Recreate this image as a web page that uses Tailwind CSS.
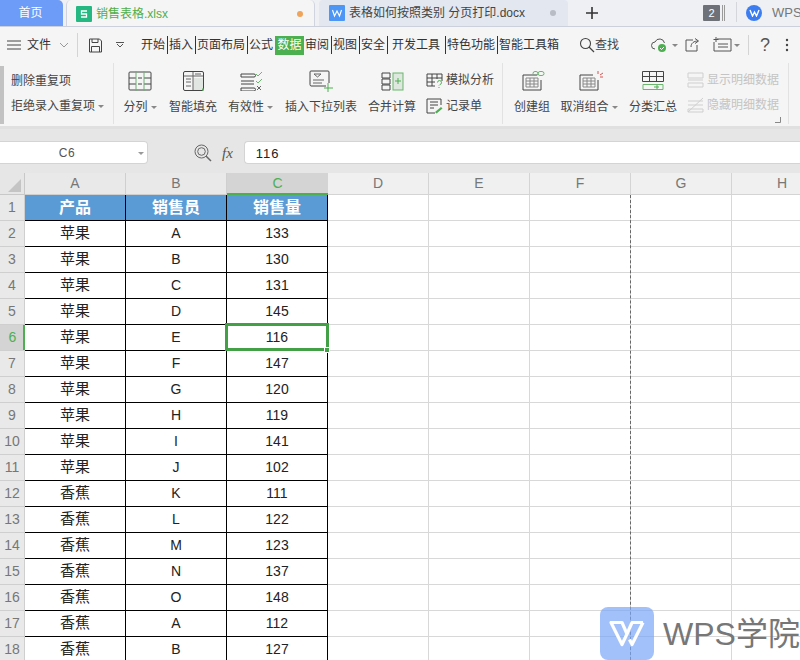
<!DOCTYPE html>
<html lang="zh"><head><meta charset="utf-8"><script src="https://cdn.jsdelivr.net/npm/@tailwindcss/browser@4"></script></head>
<body class="m-0 bg-white">
<div class="relative w-[800px] h-[660px] overflow-hidden bg-white text-[12px] text-[#333] font-['Liberation_Sans','Noto_Sans_CJK_SC',sans-serif]">

<!-- tabs -->
<div class="flex h-[27px] bg-[#eef0f4] border-b border-[#ccd0da] relative overflow-hidden [&>*]:shrink-0">
  <div class="w-[63px] h-[26px] bg-[#6c9cf8] rounded-tr-[5px] text-white text-[12px] flex items-center justify-center pr-[2px]">首页</div>
  <div class="ml-[3px] w-[249px] h-[27px] bg-[#f5f5f5] border-x border-[#d0d4de] rounded-t-[5px] flex items-center pl-[9px] pr-[11px] z-10">
    <svg width="16" height="16" viewBox="0 0 16 16" class="shrink-0"><rect width="16" height="16" rx="1" fill="#25b883"/><path d="M11 5H5.500v3h5v3H5" fill="none" stroke="#fff" stroke-width="1.300"/></svg>
    <span class="ml-[4px] text-[12px] text-[#4fae4c]">销售表格.xlsx</span>
    <span class="ml-auto w-[6px] h-[6px] rounded-full bg-[#f0a35a]"></span>
  </div>
  <div class="ml-[4px] w-[249px] h-[26px] bg-[#e3e7f0] rounded-t-[4px] flex items-center pl-[10px] pr-[12px]">
    <svg width="16" height="16" viewBox="0 0 16 16" class="shrink-0"><rect width="16" height="16" rx="1" fill="#4d96f5"/><path d="M3.500 5l2 6 2.500-5 2.500 5 2-6" fill="none" stroke="#fff" stroke-width="1.100"/></svg>
    <span class="ml-[4px] text-[12px] text-[#444] whitespace-nowrap">表格如何按照类别 分页打印.docx</span>
    <span class="ml-auto w-[6px] h-[6px] rounded-full bg-[#b8bcc4]"></span>
  </div>
  <svg width="14" height="14" viewBox="0 0 14 14" class="ml-[17px] mt-[6px]"><path d="M7 1v12M1 7h12" stroke="#333" stroke-width="1.600"/></svg>
  <div class="ml-[104px] mt-[5px] w-[17px] h-[16px] bg-[#6e7278] text-white text-[11px] rounded-[1px] flex items-center justify-center">2</div>
  <div class="ml-[2px] mt-[5px] w-[3px] h-[16px] border-x border-[#9a9a9a]"></div>
  <div class="ml-[11px] mt-[2px] w-px h-[20px] bg-[#d4d6dc]"></div>
  <div class="ml-[9px] mt-[5px] w-[16px] h-[16px] rounded-full bg-[#3d7df2] flex items-center justify-center">
    <svg width="11" height="8" viewBox="0 0 11 8"><path d="M1 1l2.500 6L5.500 3l2 4L10 1" fill="none" stroke="#fff" stroke-width="1.400"/></svg>
  </div>
  <span class="ml-[10px] mt-[3px] text-[13px] text-[#777] whitespace-nowrap">WPS学院</span>
</div>

<!-- menu -->
<div class="flex items-center h-[36px] bg-[#f5f5f5] text-[12px] text-[#333] relative whitespace-nowrap">
  <svg width="15" height="10" viewBox="0 0 15 10" class="ml-[7px]"><path d="M0 1h14M0 5h14M0 9h14" stroke="#444"/></svg>
  <span class="ml-[5px]">文件</span>
  <svg width="10" height="6" viewBox="0 0 10 6" class="ml-[8px]"><path d="M1 1l4 4 4-4" fill="none" stroke="#999"/></svg>
  <div class="ml-[8px] w-px h-[24px] bg-[#d4d4d4]"></div>
  <svg width="15" height="15" viewBox="0 0 15 15" class="ml-[10px]"><path d="M1.500 1h10l2 2v11h-12zM4 1v3.500h6V1M3.500 14V8.500h8V14" fill="none" stroke="#444"/></svg>
  <svg width="8" height="6" viewBox="0 0 8 6" class="ml-[13px]"><path d="M0 0.500h8M1 2l3 3 3-3" fill="none" stroke="#555"/></svg>
  <div class="ml-[17px] flex items-center">
    <span class="w-[24px]">开始</span><i class="w-px h-[18px] bg-[#333] ml-[2px] mr-[1px]"></i>
    <span class="w-[24px]">插入</span><i class="w-px h-[18px] bg-[#333] ml-[2px] mr-[1px]"></i>
    <span class="w-[48px]">页面布局</span><i class="w-px h-[18px] bg-[#333] ml-[2px] mr-[1px]"></i>
    <span class="w-[26px]">公式</span>
    <span class="w-[29px] h-[19px] leading-[19px] text-center bg-[#4caf50] text-white">数据</span>
    <span class="ml-[1px] w-[24px]">审阅</span><i class="w-px h-[18px] bg-[#333] ml-[2px] mr-[1px]"></i>
    <span class="w-[24px]">视图</span><i class="w-px h-[18px] bg-[#333] ml-[2px] mr-[1px]"></i>
    <span class="w-[24px]">安全</span><i class="w-px h-[18px] bg-[#333] ml-[2px] mr-[4px]"></i>
    <span class="w-[48px]">开发工具</span><i class="w-px h-[18px] bg-[#333] ml-[5px] mr-[1px]"></i>
    <span class="w-[48px]">特色功能</span><i class="w-px h-[18px] bg-[#333] ml-[2px] mr-[1px]"></i>
    <span class="w-[60px]">智能工具箱</span>
  </div>
  <svg width="16" height="16" viewBox="0 0 16 16" class="ml-[20px]"><circle cx="6.500" cy="6.500" r="5" fill="none" stroke="#444" stroke-width="1.100"/><path d="M10 10l5 5" stroke="#444" stroke-width="1.200"/></svg>
  <span class="text-[#444]">查找</span>
  <svg width="20" height="16" viewBox="0 0 20 16" class="ml-[31px]"><path d="M5 12a3.500 3.500 0 0 1 0-7 5 5 0 0 1 9.500 1" fill="none" stroke="#555"/><circle cx="12" cy="11" r="4" fill="#4caf50"/><path d="M10 11l1.500 1.500 2.500-2.500" fill="none" stroke="#fff"/></svg>
  <i class="ml-[2px] border-x-[3px] border-x-transparent border-t-[3px] border-t-[#888]"></i>
  <svg width="15" height="14" viewBox="0 0 15 14" class="ml-[7px]"><path d="M8 2H1v11h11V7M6 9c0-4 3-6 7-6M10 0.500l3.500 2.500L10 5.500" fill="none" stroke="#555"/></svg>
  <svg width="20" height="16" viewBox="0 0 20 16" class="ml-[13px]"><path d="M4 2h14v12H1V5M3 0v5M0.500 2.500h5M5 7h10M5 10h10" fill="none" stroke="#555"/></svg>
  <i class="ml-[1px] border-x-[3px] border-x-transparent border-t-[3px] border-t-[#888]"></i>
  <div class="ml-[8px] w-px h-[20px] bg-[#d4d4d4]"></div>
  <span class="ml-[11px] text-[18px] font-light text-[#555]">?</span>
  <svg width="4" height="14" viewBox="0 0 4 14" class="ml-[15px]"><circle cx="2" cy="2" r="1.200" fill="#444"/><circle cx="2" cy="7" r="1.200" fill="#444"/><circle cx="2" cy="12" r="1.200" fill="#444"/></svg>
</div>

<!-- ribbon -->
<div class="flex h-[66px] bg-[#f5f5f5] border-b-[3px] border-[#e0e0e0] text-[12px] text-[#444] whitespace-nowrap">
  <div class="relative w-[114px] border-r border-[#e2e2e2] mb-[2px] flex flex-col pl-[11px] pt-[9px] gap-[7px]">
    <div class="absolute left-0 top-[3px] w-[4px] h-[58px] bg-[#c2c2c2]"></div>
    <span class="leading-[18px]">删除重复项</span>
    <span class="leading-[18px]">拒绝录入重复项<i class="inline-block ml-[3px] mb-[2px] border-x-[3px] border-x-transparent border-t-[3px] border-t-[#888]"></i></span>
  </div>
  <div class="relative w-[389px] border-r border-[#e2e2e2] mb-[2px]">
    <div class="flex pt-[7px] h-[63px]">
      <div class="w-[52px] flex flex-col items-center">
        <svg width="24" height="20" viewBox="0 0 24 20" class="mt-[1px]"><path d="M8 1H2a1 1 0 0 0-1 1v16a1 1 0 0 0 1 1h6M16 1h6a1 1 0 0 1 1 1v16a1 1 0 0 1-1 1h-6M1 7h7M16 7h7M1 13h7M16 13h7M8 1h8M8 19h8M10 7h4M10 13h4" fill="none" stroke="#444"/><path d="M8 0v20M16 0v20" stroke="#6fae72"/></svg>
        <span class="mt-[9px] leading-[14px]">分列<i class="inline-block ml-[3px] mb-[2px] border-x-[3px] border-x-transparent border-t-[3px] border-t-[#888]"></i></span>
      </div>
      <div class="w-[54px] flex flex-col items-center">
        <svg width="21" height="20" viewBox="0 0 21 20" class="mt-[1px]"><rect x="0.500" y="0.500" width="20" height="19" rx="1.500" fill="none" stroke="#444"/><rect x="10" y="7" width="10" height="12" fill="#e2e6e2"/><path d="M1 5h19M10 1v18M3 8h5M3 11h5M3 15h5M12 3h6" stroke="#666"/><path d="M19 18.500h2" stroke="#4caf50" stroke-width="2"/></svg>
        <span class="mt-[9px] leading-[14px]">智能填充</span>
      </div>
      <div class="w-[55px] flex flex-col items-center ml-[3px]">
        <svg width="22" height="20" viewBox="0 0 22 20" class="mt-[1px]"><path d="M1 3h13a1 1 0 0 1 0 3H1zM1 10h13M1 13h13M1 17h13a1 1 0 0 1 0 3H1z" fill="none" stroke="#444"/><path d="M16 3l2 2 4-4M16 10l2 2 4-4" fill="none" stroke="#6bb56e"/><path d="M17 15l4 4M21 15l-4 4" stroke="#666"/></svg>
        <span class="mt-[9px] leading-[14px]">有效性<i class="inline-block ml-[3px] mb-[2px] border-x-[3px] border-x-transparent border-t-[3px] border-t-[#888]"></i></span>
      </div>
      <div class="w-[74px] flex flex-col items-center ml-[6px]">
        <svg width="24" height="22" viewBox="0 0 24 22"><path d="M17 16H2a1.500 1.500 0 0 1-1-1.500V2a1 1 0 0 1 1-1h17a1 1 0 0 1 1 1v11" fill="none" stroke="#444"/><path d="M5 4h7l-3.500 3zM4 10h11M4 13h9" fill="none" stroke="#666"/><path d="M19 13v9M15 18h9" stroke="#4caf50"/></svg>
        <span class="mt-[8px] leading-[14px]">插入下拉列表</span>
      </div>
      <div class="w-[52px] flex flex-col items-center ml-[8px]">
        <svg width="23" height="20" viewBox="0 0 23 20" class="mt-[1px]"><path d="M1 2h8v5H1zM1 8h8v5H1zM1 14h8v5H1z" fill="none" stroke="#444"/><rect x="12" y="2" width="10" height="17" fill="#dfe8df" stroke="#6bb56e"/><path d="M14 10h6M17 7v6" stroke="#4caf50"/></svg>
        <span class="mt-[9px] leading-[14px]">合并计算</span>
      </div>
      <div class="ml-[8px] flex flex-col pt-[1px] gap-[8px]">
        <div class="flex items-center h-[18px]"><svg width="17" height="15" viewBox="0 0 17 15"><path d="M9 13H1V1h15v7M1 5h15M6 1v12M11 1v5M1 9h8" fill="none" stroke="#444"/><path d="M11.500 9.500a2 2 0 1 1 2.500 2l-1 1M13 14v1" fill="none" stroke="#4caf50"/></svg><span class="ml-[3px]">模拟分析</span></div>
        <div class="flex items-center h-[18px]"><svg width="17" height="16" viewBox="0 0 17 16"><path d="M15 7V1H1v14h8M4 4h8M4 7h8M4 10h4" fill="none" stroke="#444"/><path d="M9 14l6-5 1.500 1.500-6 5z" fill="#4caf50"/></svg><span class="ml-[3px]">记录单</span></div>
      </div>
    </div>
  </div>
  <div class="relative w-[286px] flex pt-[7px] mb-[2px] border-r border-[#e2e2e2]">
    <div class="w-[58px] flex flex-col items-center">
      <svg width="24" height="20" viewBox="0 0 24 20" class="mt-[1px] ml-[4px]"><path d="M15 4H1v15h18V9" fill="none" stroke="#444"/><path d="M4 7h12v9H4zM4 10h12M4 13h12M8 7v9M12 7v9" fill="none" stroke="#888"/><rect x="11" y="0.500" width="5" height="4" rx="2" fill="none" stroke="#6bb56e"/><rect x="16" y="0.500" width="6" height="4" rx="2" fill="none" stroke="#6bb56e"/></svg>
      <span class="mt-[9px] leading-[14px]">创建组</span>
    </div>
    <div class="w-[56px] flex flex-col items-center">
      <svg width="24" height="20" viewBox="0 0 24 20" class="mt-[1px] ml-[4px]"><path d="M14 4H1v15h18V9" fill="none" stroke="#444"/><path d="M4 7h12v9H4zM4 10h12M4 13h12M8 7v9M12 7v9" fill="none" stroke="#888"/><path d="M19 0v3M21 4l3-2M21 6h3" stroke="#d9534f"/></svg>
      <span class="mt-[9px] leading-[14px]">取消组合<i class="inline-block ml-[3px] mb-[2px] border-x-[3px] border-x-transparent border-t-[3px] border-t-[#888]"></i></span>
    </div>
    <div class="w-[58px] flex flex-col items-center ml-[7px]">
      <svg width="22" height="20" viewBox="0 0 22 20" class="mt-[1px]"><path d="M0.500 0.500h21v10h-21zM0.500 5.500h21M7.500 0.500v10M14.500 0.500v10" fill="none" stroke="#444"/><path d="M1 13.500h20v5H1z" fill="none" stroke="#6bb56e"/><path d="M12 16h5M15 14v4" stroke="#4caf50"/></svg>
      <span class="mt-[9px] leading-[14px]">分类汇总</span>
    </div>
    <div class="ml-[5px] flex flex-col gap-[7px] text-[#c4c4c4] pt-[1px]">
      <div class="flex items-center h-[18px]"><svg width="17" height="16" viewBox="0 0 17 16"><path d="M1 1h15v5H1zM1 8h15M1 11h15v4H1z" fill="none" stroke="#cfcfcf"/></svg><span class="ml-[3px]">显示明细数据</span></div>
      <div class="flex items-center h-[18px]"><svg width="17" height="16" viewBox="0 0 17 16"><path d="M1 4h15M1 8h15M1 12h15v3H1zM1 15L16 1" fill="none" stroke="#cfcfcf"/></svg><span class="ml-[3px]">隐藏明细数据</span></div>
    </div>
    <svg width="6" height="6" viewBox="0 0 6 6" class="absolute right-[7px] bottom-[1px]"><path d="M0 5.500h5.500V0" fill="none" stroke="#888"/></svg>
  </div>
</div>

<!-- formula bar -->
<div class="flex items-start h-[44px] bg-[#e6e6e6] pt-[12px]">
  <div class="relative w-[148px] h-[23px] bg-white rounded-r-[4px] border border-l-0 border-[#d4d4d4] flex items-center justify-center pr-[13px] text-[12px] text-[#555] tracking-[0.5px]">C6
    <i class="absolute right-[3px] top-[10px] border-x-[3px] border-x-transparent border-t-[3px] border-t-[#999]"></i>
  </div>
  <svg width="18" height="18" viewBox="0 0 18 18" class="ml-[46px] mt-[3px]"><circle cx="7.500" cy="7.500" r="6.500" fill="none" stroke="#666"/><circle cx="7.500" cy="7.500" r="3.800" fill="none" stroke="#666"/><path d="M12 12l5 5" stroke="#666" stroke-width="1.500"/></svg>
  <span class="ml-[10px] mt-[1px] text-[15px] italic text-[#555] font-['Liberation_Serif',serif]">fx</span>
  <div class="ml-[11px] flex-1 h-[23px] bg-white rounded-l-[4px] border border-r-0 border-[#d4d4d4] pl-[11px] leading-[23px] text-[13px] tracking-[1px] text-[#222]">116</div>
</div>

<!-- sheet -->
<div class="grid grid-cols-[25px_repeat(8,101px)] grid-rows-[22px_repeat(18,26px)] text-[14px] text-[#222] [&>*]:flex [&>*]:items-center [&>*]:justify-center">
  <div class="bg-[#e6e6e6] border-r border-b border-[#c8c8c8] relative"><svg width="13" height="13" viewBox="0 0 13 13" class="absolute right-[3px] bottom-[2px]"><path d="M13 0v13H0z" fill="#c4c4c4"/></svg></div>
  <div class="bg-[#e9e9e9] border-r border-b border-[#cfcfcf] text-[#777]">A</div>
  <div class="bg-[#e9e9e9] border-r border-b border-[#cfcfcf] text-[#777]">B</div>
  <div class="bg-[#d4d4d4] border-b-2 border-[#4caf50] text-[#4caf50]">C</div>
  <div class="bg-[#f0f0f0] border-r border-b border-[#d4d4d4] text-[#777]">D</div>
  <div class="bg-[#f0f0f0] border-r border-b border-[#d4d4d4] text-[#777]">E</div>
  <div class="bg-[#f0f0f0] border-r border-b border-[#d4d4d4] text-[#777]">F</div>
  <div class="bg-[#f0f0f0] border-r border-b border-[#d4d4d4] text-[#777]">G</div>
  <div class="bg-[#f0f0f0] border-r border-b border-[#d4d4d4] text-[#777]">H</div>

  <div class="bg-[#e9e9e9] border-r border-b border-[#cfcfcf] text-[#777]">1</div>
  <div class="bg-[#5b9bd5] border-r border-b border-black text-white font-bold text-[16px]">产品</div>
  <div class="bg-[#5b9bd5] border-r border-b border-black text-white font-bold text-[16px]">销售员</div>
  <div class="bg-[#5b9bd5] border-r border-b border-black text-white font-bold text-[16px]">销售量</div>
  <div class="border-r border-b border-[#d8d8d8]"></div><div class="border-r border-b border-[#d8d8d8]"></div><div class="border-r border-b border-[#d8d8d8]"></div><div class="border-r border-b border-[#d8d8d8]"></div><div class="border-r border-b border-[#d8d8d8]"></div>

  <div class="bg-[#e9e9e9] border-r border-b border-[#cfcfcf] text-[#777]">2</div>
  <div class="border-r border-b border-black text-[15px]">苹果</div><div class="border-r border-b border-black">A</div><div class="border-r border-b border-black">133</div>
  <div class="border-r border-b border-[#d8d8d8]"></div><div class="border-r border-b border-[#d8d8d8]"></div><div class="border-r border-b border-[#d8d8d8]"></div><div class="border-r border-b border-[#d8d8d8]"></div><div class="border-r border-b border-[#d8d8d8]"></div>

  <div class="bg-[#e9e9e9] border-r border-b border-[#cfcfcf] text-[#777]">3</div>
  <div class="border-r border-b border-black text-[15px]">苹果</div><div class="border-r border-b border-black">B</div><div class="border-r border-b border-black">130</div>
  <div class="border-r border-b border-[#d8d8d8]"></div><div class="border-r border-b border-[#d8d8d8]"></div><div class="border-r border-b border-[#d8d8d8]"></div><div class="border-r border-b border-[#d8d8d8]"></div><div class="border-r border-b border-[#d8d8d8]"></div>

  <div class="bg-[#e9e9e9] border-r border-b border-[#cfcfcf] text-[#777]">4</div>
  <div class="border-r border-b border-black text-[15px]">苹果</div><div class="border-r border-b border-black">C</div><div class="border-r border-b border-black">131</div>
  <div class="border-r border-b border-[#d8d8d8]"></div><div class="border-r border-b border-[#d8d8d8]"></div><div class="border-r border-b border-[#d8d8d8]"></div><div class="border-r border-b border-[#d8d8d8]"></div><div class="border-r border-b border-[#d8d8d8]"></div>

  <div class="bg-[#e9e9e9] border-r border-b border-[#cfcfcf] text-[#777]">5</div>
  <div class="border-r border-b border-black text-[15px]">苹果</div><div class="border-r border-b border-black">D</div><div class="border-r border-b border-black">145</div>
  <div class="border-r border-b border-[#d8d8d8]"></div><div class="border-r border-b border-[#d8d8d8]"></div><div class="border-r border-b border-[#d8d8d8]"></div><div class="border-r border-b border-[#d8d8d8]"></div><div class="border-r border-b border-[#d8d8d8]"></div>

  <div class="relative bg-[#d4d4d4] border-b border-[#cfcfcf] text-[#4caf50]">6<i class="absolute right-0 top-0 bottom-0 w-[2px] bg-[#4caf50]"></i></div>
  <div class="border-r border-b border-black text-[15px]">苹果</div><div class="border-r border-b border-black">E</div>
  <div class="relative border-r border-b border-black">116<i class="absolute left-[-2px] top-[-2px] w-[104px] h-[28px] border-[3px] border-[#43a047]"></i><i class="absolute right-[-3px] bottom-[-3px] w-[6px] h-[6px] bg-[#43a047] border border-white z-10"></i></div>
  <div class="border-r border-b border-[#d8d8d8]"></div><div class="border-r border-b border-[#d8d8d8]"></div><div class="border-r border-b border-[#d8d8d8]"></div><div class="border-r border-b border-[#d8d8d8]"></div><div class="border-r border-b border-[#d8d8d8]"></div>

  <div class="bg-[#e9e9e9] border-r border-b border-[#cfcfcf] text-[#777]">7</div>
  <div class="border-r border-b border-black text-[15px]">苹果</div><div class="border-r border-b border-black">F</div><div class="border-r border-b border-black">147</div>
  <div class="border-r border-b border-[#d8d8d8]"></div><div class="border-r border-b border-[#d8d8d8]"></div><div class="border-r border-b border-[#d8d8d8]"></div><div class="border-r border-b border-[#d8d8d8]"></div><div class="border-r border-b border-[#d8d8d8]"></div>

  <div class="bg-[#e9e9e9] border-r border-b border-[#cfcfcf] text-[#777]">8</div>
  <div class="border-r border-b border-black text-[15px]">苹果</div><div class="border-r border-b border-black">G</div><div class="border-r border-b border-black">120</div>
  <div class="border-r border-b border-[#d8d8d8]"></div><div class="border-r border-b border-[#d8d8d8]"></div><div class="border-r border-b border-[#d8d8d8]"></div><div class="border-r border-b border-[#d8d8d8]"></div><div class="border-r border-b border-[#d8d8d8]"></div>

  <div class="bg-[#e9e9e9] border-r border-b border-[#cfcfcf] text-[#777]">9</div>
  <div class="border-r border-b border-black text-[15px]">苹果</div><div class="border-r border-b border-black">H</div><div class="border-r border-b border-black">119</div>
  <div class="border-r border-b border-[#d8d8d8]"></div><div class="border-r border-b border-[#d8d8d8]"></div><div class="border-r border-b border-[#d8d8d8]"></div><div class="border-r border-b border-[#d8d8d8]"></div><div class="border-r border-b border-[#d8d8d8]"></div>

  <div class="bg-[#e9e9e9] border-r border-b border-[#cfcfcf] text-[#777]">10</div>
  <div class="border-r border-b border-black text-[15px]">苹果</div><div class="border-r border-b border-black">I</div><div class="border-r border-b border-black">141</div>
  <div class="border-r border-b border-[#d8d8d8]"></div><div class="border-r border-b border-[#d8d8d8]"></div><div class="border-r border-b border-[#d8d8d8]"></div><div class="border-r border-b border-[#d8d8d8]"></div><div class="border-r border-b border-[#d8d8d8]"></div>

  <div class="bg-[#e9e9e9] border-r border-b border-[#cfcfcf] text-[#777]">11</div>
  <div class="border-r border-b border-black text-[15px]">苹果</div><div class="border-r border-b border-black">J</div><div class="border-r border-b border-black">102</div>
  <div class="border-r border-b border-[#d8d8d8]"></div><div class="border-r border-b border-[#d8d8d8]"></div><div class="border-r border-b border-[#d8d8d8]"></div><div class="border-r border-b border-[#d8d8d8]"></div><div class="border-r border-b border-[#d8d8d8]"></div>

  <div class="bg-[#e9e9e9] border-r border-b border-[#cfcfcf] text-[#777]">12</div>
  <div class="border-r border-b border-black text-[15px]">香蕉</div><div class="border-r border-b border-black">K</div><div class="border-r border-b border-black">111</div>
  <div class="border-r border-b border-[#d8d8d8]"></div><div class="border-r border-b border-[#d8d8d8]"></div><div class="border-r border-b border-[#d8d8d8]"></div><div class="border-r border-b border-[#d8d8d8]"></div><div class="border-r border-b border-[#d8d8d8]"></div>

  <div class="bg-[#e9e9e9] border-r border-b border-[#cfcfcf] text-[#777]">13</div>
  <div class="border-r border-b border-black text-[15px]">香蕉</div><div class="border-r border-b border-black">L</div><div class="border-r border-b border-black">122</div>
  <div class="border-r border-b border-[#d8d8d8]"></div><div class="border-r border-b border-[#d8d8d8]"></div><div class="border-r border-b border-[#d8d8d8]"></div><div class="border-r border-b border-[#d8d8d8]"></div><div class="border-r border-b border-[#d8d8d8]"></div>

  <div class="bg-[#e9e9e9] border-r border-b border-[#cfcfcf] text-[#777]">14</div>
  <div class="border-r border-b border-black text-[15px]">香蕉</div><div class="border-r border-b border-black">M</div><div class="border-r border-b border-black">123</div>
  <div class="border-r border-b border-[#d8d8d8]"></div><div class="border-r border-b border-[#d8d8d8]"></div><div class="border-r border-b border-[#d8d8d8]"></div><div class="border-r border-b border-[#d8d8d8]"></div><div class="border-r border-b border-[#d8d8d8]"></div>

  <div class="bg-[#e9e9e9] border-r border-b border-[#cfcfcf] text-[#777]">15</div>
  <div class="border-r border-b border-black text-[15px]">香蕉</div><div class="border-r border-b border-black">N</div><div class="border-r border-b border-black">137</div>
  <div class="border-r border-b border-[#d8d8d8]"></div><div class="border-r border-b border-[#d8d8d8]"></div><div class="border-r border-b border-[#d8d8d8]"></div><div class="border-r border-b border-[#d8d8d8]"></div><div class="border-r border-b border-[#d8d8d8]"></div>

  <div class="bg-[#e9e9e9] border-r border-b border-[#cfcfcf] text-[#777]">16</div>
  <div class="border-r border-b border-black text-[15px]">香蕉</div><div class="border-r border-b border-black">O</div><div class="border-r border-b border-black">148</div>
  <div class="border-r border-b border-[#d8d8d8]"></div><div class="border-r border-b border-[#d8d8d8]"></div><div class="border-r border-b border-[#d8d8d8]"></div><div class="border-r border-b border-[#d8d8d8]"></div><div class="border-r border-b border-[#d8d8d8]"></div>

  <div class="bg-[#e9e9e9] border-r border-b border-[#cfcfcf] text-[#777]">17</div>
  <div class="border-r border-b border-black text-[15px]">香蕉</div><div class="border-r border-b border-black">A</div><div class="border-r border-b border-black">112</div>
  <div class="border-r border-b border-[#d8d8d8]"></div><div class="border-r border-b border-[#d8d8d8]"></div><div class="border-r border-b border-[#d8d8d8]"></div><div class="border-r border-b border-[#d8d8d8]"></div><div class="border-r border-b border-[#d8d8d8]"></div>

  <div class="bg-[#e9e9e9] border-r border-b border-[#cfcfcf] text-[#777]">18</div>
  <div class="border-r border-b border-black text-[15px]">香蕉</div><div class="border-r border-b border-black">B</div><div class="border-r border-b border-black">127</div>
  <div class="border-r border-b border-[#d8d8d8]"></div><div class="border-r border-b border-[#d8d8d8]"></div><div class="border-r border-b border-[#d8d8d8]"></div><div class="border-r border-b border-[#d8d8d8]"></div><div class="border-r border-b border-[#d8d8d8]"></div>
</div>

<!-- page break dashed -->
<div class="absolute left-[630px] top-[195px] bottom-0 border-l border-dashed border-[#666]"></div>

<!-- watermark -->
<div class="absolute left-[600px] top-[607px] flex items-center">
  <div class="w-[54px] h-[53px] rounded-[8px] bg-[#7aa7f9]/70 flex items-center justify-center">
    <svg width="38" height="27" viewBox="0 0 38 27"><path d="M3 2.500H14L19 14 14 24.500ZM35 2.500H24L19 14M35 2.500 24 24.500 21.500 19.500" fill="none" stroke="#fff" stroke-width="3.200" stroke-linejoin="round"/></svg>
  </div>
  <span class="ml-[9px] text-[32px] text-[#777] whitespace-nowrap leading-[40px]">WPS学院</span>
</div>
</div>
</body></html>
